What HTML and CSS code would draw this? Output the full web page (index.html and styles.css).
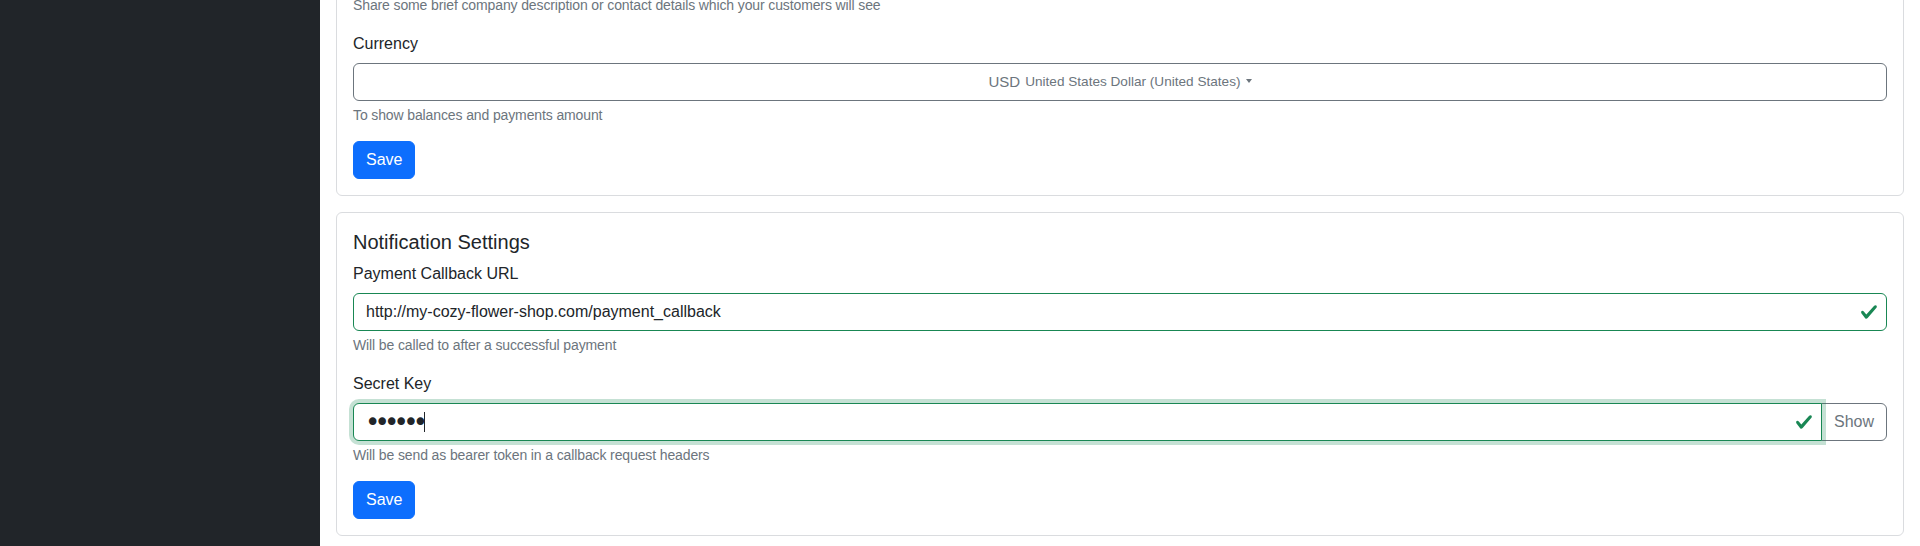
FILE: index.html
```html
<!DOCTYPE html>
<html lang="en">
<head>
<meta charset="utf-8">
<title>Settings</title>
<link rel="stylesheet" href="styles.css">
</head>
<body>
<div class="layout">
  <aside class="sidebar"></aside>
  <main class="content">
    <section class="card card-first">
      <div class="card-body">
        <div class="field">
          <div class="form-text">Share some brief company description or contact details which your customers will see</div>
        </div>
        <div class="field">
          <label class="form-label">Currency</label>
          <button type="button" class="select-btn"><span class="cur-code">USD</span><span class="cur-name">United States Dollar (United States)</span><span class="caret"></span></button>
          <div class="form-text">To show balances and payments amount</div>
        </div>
        <button type="button" class="btn-primary">Save</button>
      </div>
    </section>

    <section class="card">
      <div class="card-body">
        <h5 class="card-title">Notification Settings</h5>
        <div class="field">
          <label class="form-label">Payment Callback URL</label>
          <div class="valid-wrap">
            <input type="text" class="form-control is-valid" value="http://my-cozy-flower-shop.com/payment_callback">
            <svg class="valid-icon" viewBox="0 0 8 8" width="18" height="18"><path fill="#198754" d="M2.3 6.73.6 4.53c-.4-1.04.46-1.4 1.1-.8l1.1 1.4 3.4-3.8c.6-.63 1.6-.27 1.2.7l-4 4.6c-.43.5-.8.4-1.1.1z"/></svg>
          </div>
          <div class="form-text">Will be called to after a successful payment</div>
        </div>
        <div class="field">
          <label class="form-label">Secret Key</label>
          <div class="input-group">
            <div class="valid-wrap grow">
              <input type="password" class="form-control is-valid is-focused group-first" value="secret">
              <svg class="valid-icon" viewBox="0 0 8 8" width="18" height="18"><path fill="#198754" d="M2.3 6.73.6 4.53c-.4-1.04.46-1.4 1.1-.8l1.1 1.4 3.4-3.8c.6-.63 1.6-.27 1.2.7l-4 4.6c-.43.5-.8.4-1.1.1z"/></svg>
              <span class="fake-caret"></span>
            </div>
            <button type="button" class="btn-outline group-last">Show</button>
          </div>
          <div class="form-text">Will be send as bearer token in a callback request headers</div>
        </div>
        <button type="button" class="btn-primary">Save</button>
      </div>
    </section>
  </main>
</div>
</body>
</html>
```

FILE: styles.css
```css
* { box-sizing: border-box; }

html, body {
  margin: 0;
  height: 100%;
  overflow: hidden;
}

body {
  font-family: "Liberation Sans", Arial, sans-serif;
  font-size: 16px;
  line-height: 1.5;
  color: #212529;
  background: #fff;
}

.layout {
  display: flex;
  height: 100vh;
}

.sidebar {
  flex: 0 0 320px;
  background: #212529;
}

.content {
  flex: 1 1 auto;
  padding: 0 16px;
  display: flex;
  flex-direction: column;
  gap: 16px;
  min-width: 0;
}

.card {
  border: 1px solid #dadcdf;
  border-radius: 6px;
  background: #fff;
}

.card-first {
  margin-top: -22px;
}

.card-body {
  padding: 16px;
}

.card-title {
  margin: 0 0 8px;
  padding-top: 1px;
  height: 24px;
  font-size: 20px;
  font-weight: 500;
  line-height: 24px;
}

.field {
  margin-bottom: 16px;
}

.form-label {
  display: block;
  padding-top: 1px;
  margin-bottom: 7px;
  line-height: 24px;
}

.form-text {
  margin-top: 4px;
  font-size: 14px;
  line-height: 20px;
  letter-spacing: -0.12px;
  color: #6c757d;
}

.field > .form-text:first-child {
  margin-top: 0;
}

.select-btn {
  display: flex;
  align-items: center;
  justify-content: center;
  width: 100%;
  height: 38px;
  padding: 6px 12px;
  border: 1px solid #6c757d;
  border-radius: 6px;
  background: #fff;
  color: #6c757d;
  font-family: inherit;
  font-size: 16px;
  line-height: 24px;
}

.cur-code {
  font-size: 15px;
}

.cur-name {
  margin-left: 5px;
  font-size: 13.6px;
}

.caret {
  display: inline-block;
  margin-left: 5px;
  width: 0;
  height: 0;
  border-top: 4px solid #6c757d;
  border-left: 3.5px solid transparent;
  border-right: 3.5px solid transparent;
  position: relative;
  top: -1px;
}

.valid-wrap {
  position: relative;
}

.grow {
  flex: 1 1 auto;
  min-width: 0;
  z-index: 5;
}

.form-control {
  display: block;
  width: 100%;
  height: 38px;
  padding: 6px 12px;
  font-family: inherit;
  font-size: 16px;
  line-height: 24px;
  color: #212529;
  background: #fff;
  border: 1px solid #dee2e6;
  border-radius: 6px;
  outline: none;
}

.form-control.is-valid {
  border-color: #198754;
  padding-right: 36px;
}

.form-control.is-focused {
  box-shadow: 0 0 0 4px rgba(25, 135, 84, 0.25);
}

input[type="password"].form-control {
  font-family: "DejaVu Sans", sans-serif;
  font-size: 26px;
  letter-spacing: -5.8px;
  padding-left: 11px;
}

.valid-icon {
  position: absolute;
  right: 9px;
  top: 10px;
  pointer-events: none;
}

.fake-caret {
  position: absolute;
  left: 71px;
  top: 9px;
  width: 1px;
  height: 20px;
  background: #212529;
}

.input-group {
  display: flex;
  align-items: stretch;
}

.group-first {
  border-top-right-radius: 0;
  border-bottom-right-radius: 0;
}

.btn-outline {
  margin-left: -1px;
  height: 38px;
  padding: 6px 12px;
  font-family: inherit;
  font-size: 16px;
  line-height: 24px;
  color: #6c757d;
  background: #fff;
  border: 1px solid #6c757d;
  border-radius: 6px;
}

.btn-outline.group-last {
  border-top-left-radius: 0;
  border-bottom-left-radius: 0;
}

.btn-primary {
  display: inline-block;
  height: 38px;
  padding: 6px 12px;
  font-family: inherit;
  font-size: 16px;
  line-height: 24px;
  color: #fff;
  background: #0d6efd;
  border: 1px solid #0d6efd;
  border-radius: 6px;
}
```
